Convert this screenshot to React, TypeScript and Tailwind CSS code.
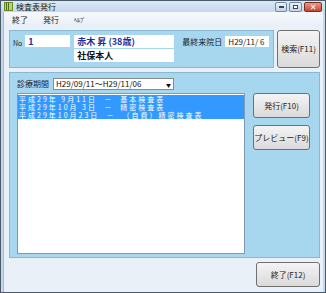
import React from 'react';

const font = { fontFamily: '"Noto Sans CJK JP", "DejaVu Sans", sans-serif' };

const Btn: React.FC<{ label: string; className?: string }> = ({ label, className }) => (
  <div
    className={
      'flex items-center justify-center whitespace-nowrap rounded-[3px] border border-[#707070] bg-gradient-to-b from-[#f4f4f4] to-[#dadada] text-[8px] text-[#222] ' +
      (className ?? '')
    }
  >
    {label}
  </div>
);

const rows = [
  '平成29年 9月11日  －  基本検査表',
  '平成29年10月 3日  －  精密検査表',
  '平成29年10月23日  －  （自費）精密検査表',
];

export default function App() {
  return (
    <div
      className="w-[326px] h-[293px] flex flex-col bg-[#c6d9ec] border border-[#4a5a6a] overflow-hidden leading-none"
      style={font}
    >
      {/* title bar */}
      <div className="h-[12px] flex items-center justify-between pl-[3px] pr-[3px] bg-gradient-to-b from-[#dbe8f5] to-[#c4d8ec]">
        <div className="flex items-center gap-[3px]">
          <div className="w-[9px] h-[9px] bg-[#b5d46a] border border-[#6e8a2a] flex gap-[1px] px-[1px] items-stretch">
            <div className="w-[1px] bg-[#4f6d15]" />
            <div className="w-[1px] bg-[#4f6d15]" />
          </div>
          <span className="text-[8px] text-[#1a1a1a]">検査表発行</span>
        </div>
        <div className="flex items-start self-start gap-[2px] pt-[1px]">
          <div className="w-[12px] h-[10px] rounded-[2px] border border-[#6f8aa8] bg-gradient-to-b from-[#e8f0f8] to-[#c3d4e6] flex items-center justify-center">
            <div className="w-[5px] h-[2px] bg-white border border-[#444]" />
          </div>
          <div className="w-[13px] h-[10px] rounded-[2px] border border-[#6f8aa8] bg-gradient-to-b from-[#e8f0f8] to-[#c3d4e6] flex items-center justify-center">
            <div className="w-[5px] h-[4px] bg-white border border-[#444]" />
          </div>
          <div className="w-[18px] h-[10px] rounded-[2px] border border-[#7a2e25] bg-gradient-to-b from-[#e8988a] to-[#c5442f] flex items-center justify-center text-[8px] font-bold text-white">
            ✕
          </div>
        </div>
      </div>

      {/* client area */}
      <div className="flex-1 flex flex-col mx-[2px] mb-[2px] bg-[#e9f0f7] border-l border-[#a9b7c6]">
        {/* menu bar */}
        <div className="h-[15px] flex items-center gap-[15px] pl-[8px] bg-gradient-to-b from-[#f6f9fc] to-[#e9eff7] text-[8px] text-[#222]">
          <span>終了</span>
          <span>発行</span>
          <span className="text-[6px]">ﾍﾙﾌﾟ</span>
        </div>

        <div className="flex-1 flex flex-col pl-[5px] pr-[3px] pt-[3px] pb-[5px] gap-[4px]">
          {/* top row */}
          <div className="flex gap-[3px] h-[38px]">
            <div className="w-[265px] bg-[#a7d7ef] border border-[#8ab8d2] flex pl-[3px] pt-[4px] gap-[3px]">
              <span className="text-[7px] text-[#222] mt-[5px]">No</span>
              <div className="w-[45px] h-[12px] bg-white flex items-center pl-[3px] text-[9px] font-bold text-[#1a2f9c]">1</div>
              <div className="flex flex-col gap-[1px] ml-[1px]">
                <div className="w-[100px] h-[13px] bg-white flex items-center pl-[3px] text-[9px] font-bold text-[#1a2f9c]">
                  赤木 昇 (38歳)
                </div>
                <div className="w-[100px] h-[13px] bg-white flex items-center pl-[3px] text-[9px] font-bold text-[#111]">
                  社保本人
                </div>
              </div>
              <span className="text-[8px] text-[#222] ml-[5px] mt-[3px]">最終来院日</span>
              <div className="w-[44px] h-[11px] bg-white flex items-center pl-[3px] text-[8px] text-[#222] mt-[1px]">
                H29/11/ 6
              </div>
            </div>
            <Btn label="検索(F11)" className="w-[43px]" />
          </div>

          {/* bottom panel */}
          <div className="h-[186px] bg-[#a7d7ef] border border-[#8ab8d2] flex flex-col pl-[7px] pr-[9px] pt-[5px] pb-[3px]">
            <div className="flex items-center gap-[4px] h-[12px]">
              <span className="text-[8px] text-[#222]">診療期間</span>
              <div className="w-[121px] h-[12px] bg-white border border-[#8a8a8a] flex items-center justify-between pl-[2px] pr-[2px] text-[8px] text-[#111]">
                <span>H29/09/11～H29/11/06</span>
                <span className="text-[5px]">▼</span>
              </div>
            </div>
            <div className="flex-1 flex gap-[8px] mt-[3px]">
              <div className="w-[231px] bg-white border border-[#7c9bb3] pt-[1px]">
                {rows.map((r) => (
                  <div
                    key={r}
                    className="h-[8px] bg-[#3399ff] text-white text-[7px] leading-[8px] tracking-[2px] pl-[1px] whitespace-pre"
                  >
                    {r}
                  </div>
                ))}
              </div>
              <div className="flex flex-col gap-[7px]">
                <Btn label="発行(F10)" className="w-[57px] h-[25px]" />
                <Btn label="プレビュー(F9)" className="w-[57px] h-[25px]" />
              </div>
            </div>
          </div>

          {/* footer */}
          <div className="flex justify-end">
            <Btn label="終了(F12)" className="w-[64px] h-[25px]" />
          </div>
        </div>
      </div>
    </div>
  );
}
